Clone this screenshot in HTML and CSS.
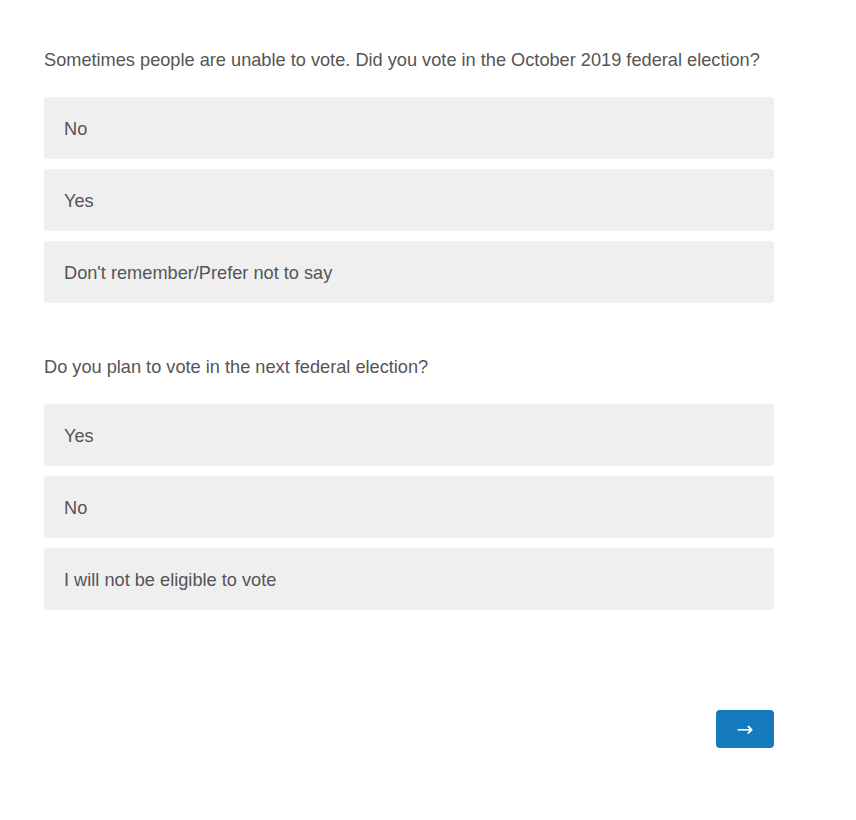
FILE: index.html
```html
<!DOCTYPE html>
<html>
<head>
<meta charset="utf-8">
<link rel="stylesheet" href="styles.css">
</head>
<body>
<main class="survey">
  <section class="question">
    <p class="question-text">Sometimes people are unable to vote. Did you vote in the October 2019 federal election?</p>
    <div class="options">
      <div class="option">No</div>
      <div class="option">Yes</div>
      <div class="option">Don't remember/Prefer not to say</div>
    </div>
  </section>
  <section class="question">
    <p class="question-text">Do you plan to vote in the next federal election?</p>
    <div class="options">
      <div class="option">Yes</div>
      <div class="option">No</div>
      <div class="option">I will not be eligible to vote</div>
    </div>
  </section>
  <div class="actions">
    <button class="next">→</button>
  </div>
</main>
</body>
</html>
```
FILE: styles.css
```css
html, body {
  margin: 0;
  padding: 0;
  background: #fff;
}
body {
  font-family: "Liberation Sans", Arial, sans-serif;
  font-size: 18.2px;
  color: #555;
}
.survey {
  width: 730px;
  padding: 48px 0 0 44px;
}
.question {
  margin-bottom: 52px;
}
.question-text {
  margin: 0 0 25px;
  line-height: 24px;
}
.options {
  display: flex;
  flex-direction: column;
  gap: 10px;
}
.option {
  height: 62px;
  box-sizing: border-box;
  background: #efefef;
  border-radius: 4px;
  padding: 2px 20px 0;
  display: flex;
  align-items: center;
}
.actions {
  display: flex;
  justify-content: flex-end;
  margin-top: 100px;
}
.next {
  width: 58px;
  height: 38px;
  border: none;
  border-radius: 4px;
  background: #1479bd;
  color: #fff;
  font-family: "DejaVu Sans", sans-serif;
  font-size: 20px;
  padding: 0;
  line-height: 38px;
}
```
